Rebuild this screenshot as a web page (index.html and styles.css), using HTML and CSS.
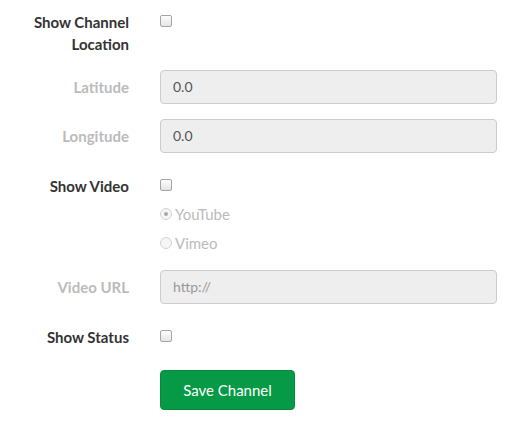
FILE: index.html
```html
<!DOCTYPE html>
<html>
<head>
<meta charset="utf-8">
<link rel="stylesheet" href="styles.css">
</head>
<body>
<form class="form">
  <div class="row">
    <label class="label">Show Channel<br>Location</label>
    <div class="control"><div class="check-line"><input type="checkbox" class="cb"></div></div>
  </div>
  <div class="row">
    <label class="label label-input muted">Latitude</label>
    <div class="control"><div class="input">0.0</div></div>
  </div>
  <div class="row">
    <label class="label label-input muted">Longitude</label>
    <div class="control"><div class="input">0.0</div></div>
  </div>
  <div class="row row-radios">
    <label class="label">Show Video</label>
    <div class="control">
      <div class="check-line"><input type="checkbox" class="cb"></div>
      <div class="radio-line muted"><span class="rb checked"></span>YouTube</div>
      <div class="radio-line muted"><span class="rb"></span>Vimeo</div>
    </div>
  </div>
  <div class="row">
    <label class="label label-input muted">Video URL</label>
    <div class="control"><div class="input placeholder">http://</div></div>
  </div>
  <div class="row">
    <label class="label">Show Status</label>
    <div class="control"><div class="check-line"><input type="checkbox" class="cb"></div></div>
  </div>
  <div class="row">
    <div class="label"></div>
    <div class="control"><button type="button" class="btn">Save Channel</button></div>
  </div>
</form>
</body>
</html>
```
FILE: styles.css
```css
html, body {
  margin: 0;
  padding: 0;
  background: #fff;
}
body {
  font-family: Lato, "Open Sans", sans-serif;
  font-size: 15px;
  color: #333;
}
.form {
  padding-top: 4px;
}
.row {
  display: flex;
  gap: 31px;
  margin-bottom: 15px;
}
.row-radios {
  margin-bottom: 13px;
}
.label {
  width: 129px;
  flex: none;
  text-align: right;
  font-weight: bold;
  line-height: 22px;
  padding-top: 7px;
}
.label-input {
  padding-top: 6px;
}
.muted {
  color: #bbb;
}
.control {
  width: 337px;
  flex: none;
}
.check-line {
  box-sizing: border-box;
  height: 31px;
  padding-top: 11px;
}
.cb {
  appearance: none;
  -webkit-appearance: none;
  box-sizing: border-box;
  display: block;
  margin: 0;
  width: 12px;
  height: 12px;
  border: 1px solid #a5a5a5;
  border-radius: 2px;
  background: linear-gradient(#fdfdfd, #e4e4e4);
}
.radio-line {
  display: flex;
  align-items: center;
  height: 29px;
  line-height: 22px;
}
.rb {
  box-sizing: border-box;
  display: inline-block;
  width: 12px;
  height: 12px;
  margin-right: 3px;
  border: 1px solid #d3d3d3;
  border-radius: 50%;
  background: #f6f6f6;
  position: relative;
}
.rb.checked::after {
  content: "";
  position: absolute;
  left: 3px;
  top: 3px;
  width: 4px;
  height: 4px;
  border-radius: 50%;
  background: #a8a8a8;
}
.input {
  box-sizing: border-box;
  height: 34px;
  background: #eee;
  border: 1px solid #ccc;
  border-radius: 4px;
  padding: 6px 12px;
  font-size: 14px;
  line-height: 20px;
  color: #555;
}
.placeholder {
  color: #999;
}
.btn {
  display: block;
  width: 135px;
  height: 40px;
  background: #069a46;
  border: 1px solid #058a3e;
  border-radius: 4px;
  color: #fff;
  font-family: Lato, "Open Sans", sans-serif;
  font-size: 15px;
  margin-top: 5px;
  padding: 0;
}
```
